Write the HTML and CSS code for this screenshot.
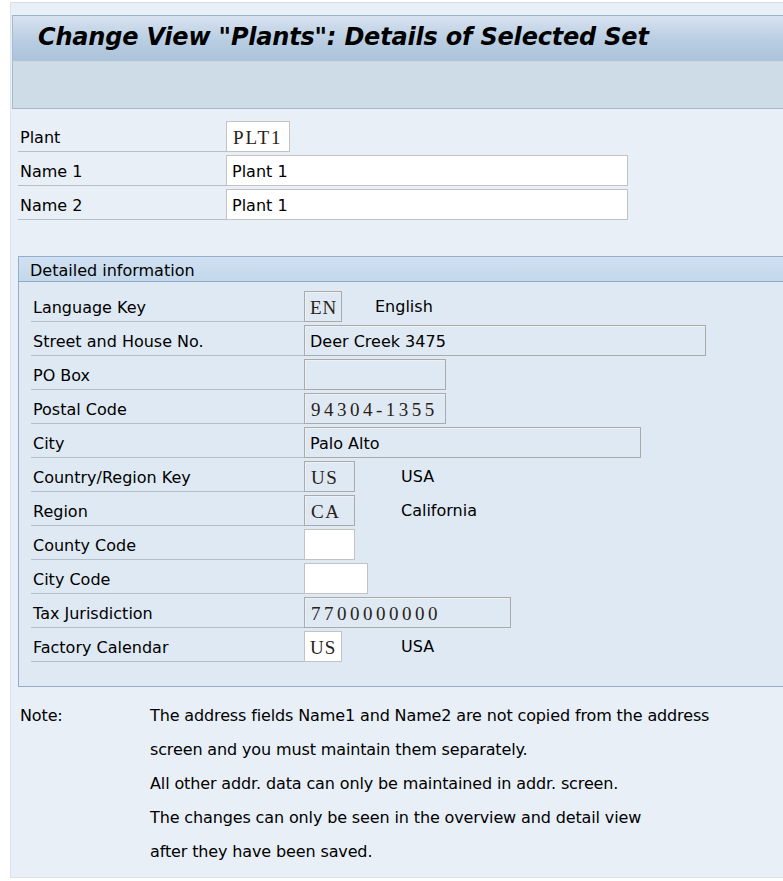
FILE: index.html
```html
<!DOCTYPE html>
<html lang="en">
<head>
    <meta charset="UTF-8">
    <meta name="viewport" content="width=device-width, initial-scale=1.0">
    <title>Change View "Plants": Details of Selected Set</title>
    <link rel="stylesheet" href="styles.css">
</head>
<body>
<div class="screen">
    <div class="title-bar"><h1>Change View "Plants": Details of Selected Set</h1></div>
    <div class="toolbar"></div>

    <div class="content">
        <div class="form top-form">
            <div class="row"><span class="label">Plant</span><span class="field edit mono w-plant">PLT1</span></div>
            <div class="row"><span class="label">Name 1</span><span class="field edit w-name">Plant 1</span></div>
            <div class="row"><span class="label">Name 2</span><span class="field edit w-name">Plant 1</span></div>
        </div>

        <div class="group">
            <div class="group-head">Detailed information</div>
            <div class="group-body form">
                <div class="row"><span class="label">Language Key</span><span class="field ro mono w-2">EN</span><span class="desc d-lang">English</span></div>
                <div class="row"><span class="label">Street and House No.</span><span class="field ro w-street">Deer Creek 3475</span></div>
                <div class="row"><span class="label">PO Box</span><span class="field ro w-po"></span></div>
                <div class="row"><span class="label">Postal Code</span><span class="field ro mono w-po">94304-1355</span></div>
                <div class="row"><span class="label">City</span><span class="field ro w-city">Palo Alto</span></div>
                <div class="row"><span class="label">Country/Region Key</span><span class="field ro mono w-3">US</span><span class="desc">USA</span></div>
                <div class="row"><span class="label">Region</span><span class="field ro mono w-3">CA</span><span class="desc">California</span></div>
                <div class="row"><span class="label">County Code</span><span class="field edit w-3"></span></div>
                <div class="row"><span class="label">City Code</span><span class="field edit w-4"></span></div>
                <div class="row"><span class="label">Tax Jurisdiction</span><span class="field ro mono w-tax">7700000000</span></div>
                <div class="row"><span class="label">Factory Calendar</span><span class="field edit mono w-2">US</span><span class="desc d-cal">USA</span></div>
            </div>
        </div>

        <div class="note">
            <span class="note-label">Note:</span>
            <p class="note-text">The address fields Name1 and Name2 are not copied from the address<br>
            screen and you must maintain them separately.<br>
            All other addr. data can only be maintained in addr. screen.<br>
            The changes can only be seen in the overview and detail view<br>
            after they have been saved.</p>
        </div>
    </div>
</div>
</body>
</html>
```

FILE: styles.css
```css
body {
    margin: 0;
    background: #fff;
    color: #000;
    font-family: "DejaVu Sans", sans-serif;
    font-size: 16px;
    overflow: hidden;
}

.screen {
    margin-top: 2px;
    margin-left: 10px;
    border-top: 1px solid #dcdde3;
    border-left: 1px solid #dde3ec;
    border-bottom: 1px solid #dde3ec;
    background: #e8eff7;
    padding-top: 12px;
    height: 876px;
    box-sizing: border-box;
}

/* header strip */
.title-bar {
    margin-left: 1px;
    height: 45px;
    border-top: 1px solid #9eb0c8;
    border-left: 1px solid #a9b8cb;
    border-bottom: 1px solid #c9d6e3;
    background: linear-gradient(#d7e3f0, #b9cde2 55%, #abc3db);
    display: flex;
    align-items: center;
}

.title-bar h1 {
    margin: 0 0 3px 25px;
    font-family: "DejaVu Sans", sans-serif;
    font-size: 24px;
    font-weight: bold;
    font-style: italic;
    letter-spacing: -0.2px;
    color: #000;
}

.toolbar {
    margin-left: 1px;
    height: 46px;
    background: #cedce7;
    border-left: 1px solid #a9b8cb;
    border-bottom: 1px solid #a6b5c7;
}

.content {
    padding: 9px 0 0 7px;
}

.row {
    display: flex;
    align-items: flex-end;
    height: 34px;
}

.label {
    box-sizing: border-box;
    height: 34px;
    line-height: 39px;
    padding-left: 2px;
    border-bottom: 1px solid #b8bec6;
    white-space: nowrap;
}

.top-form .label {
    width: 208px;
}

.field {
    box-sizing: border-box;
    height: 31px;
    line-height: 31px;
    padding-left: 5px;
    white-space: nowrap;
    overflow: hidden;
}

.field.edit {
    background: #fff;
    border: 1px solid #c3c3c3;
}

.field.ro {
    background: #dfe9f3;
    border: 1px solid #aaaaaa;
    box-shadow: inset 1px 1px 0 #eef1f4;
}

/* fixed-pitch look of SAP character fields */
.mono {
    font-family: "Liberation Serif", serif;
    font-size: 19px;
    letter-spacing: 3.5px;
    color: #2a2218;
    padding-left: 6px;
}

.w-plant { width: 64px; }
.w-name { width: 402px; }
.w-2 { width: 38px; }
.w-3 { width: 51px; }
.w-4 { width: 64px; }
.w-po { width: 142px; }
.w-city { width: 337px; }
.w-street { width: 402px; }
.w-tax { width: 207px; }

.w-plant.mono { letter-spacing: 2px; }
.w-2.mono { letter-spacing: 1px; padding-left: 5px; }
.w-3.mono { letter-spacing: 1.5px; }

.desc {
    height: 31px;
    line-height: 31px;
    margin-left: 46px;
}

.d-lang { margin-left: 33px; }
.d-cal { margin-left: 59px; }

/* group box */
.group {
    margin-top: 36px;
    margin-right: -20px;
    border: 1px solid #93adca;
    background: #dfe9f3;
}

.group-head {
    height: 24px;
    line-height: 27px;
    padding-left: 11px;
    background: linear-gradient(#cfe0f1, #c3d8ec);
    border-bottom: 1px solid #8fa9c6;
}

.group-body {
    padding: 6px 0 24px 12px;
}

.group-body .label {
    width: 273px;
}

/* note */
.note {
    display: flex;
    margin-top: 12px;
    letter-spacing: -0.13px;
    line-height: 34px;
}

.note-label {
    width: 130px;
    padding-left: 2px;
}

.note-text {
    margin: 0;
}
```
